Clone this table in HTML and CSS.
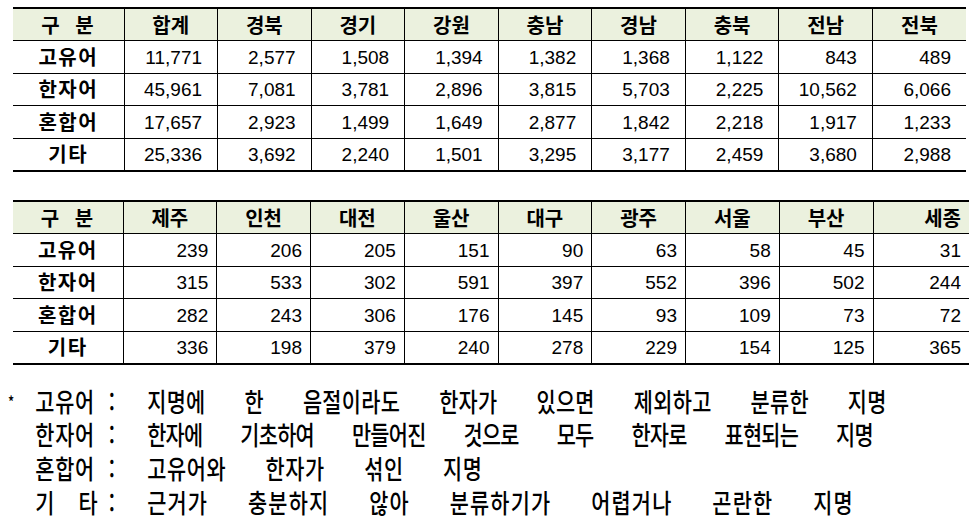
FILE: index.html
```html
<!DOCTYPE html>
<html lang="ko">
<head>
<meta charset="utf-8">
<title>지명 유형별 통계</title>
<link rel="stylesheet" href="styles.css">
</head>
<body>
<main class="page">
  <table class="stats">
    <colgroup><col class="col-label"><col span="9"></colgroup>
    <thead>
      <tr><th class="label">구&nbsp;&nbsp;분</th><th>합계</th><th>경북</th><th>경기</th><th>강원</th><th>충남</th><th>경남</th><th>충북</th><th>전남</th><th>전북</th></tr>
    </thead>
    <tbody>
      <tr><td class="label">고유어</td><td class="num">11,771</td><td class="num">2,577</td><td class="num">1,508</td><td class="num">1,394</td><td class="num">1,382</td><td class="num">1,368</td><td class="num">1,122</td><td class="num">843</td><td class="num">489</td></tr>
      <tr><td class="label">한자어</td><td class="num">45,961</td><td class="num">7,081</td><td class="num">3,781</td><td class="num">2,896</td><td class="num">3,815</td><td class="num">5,703</td><td class="num">2,225</td><td class="num">10,562</td><td class="num">6,066</td></tr>
      <tr><td class="label">혼합어</td><td class="num">17,657</td><td class="num">2,923</td><td class="num">1,499</td><td class="num">1,649</td><td class="num">2,877</td><td class="num">1,842</td><td class="num">2,218</td><td class="num">1,917</td><td class="num">1,233</td></tr>
      <tr><td class="label">기타</td><td class="num">25,336</td><td class="num">3,692</td><td class="num">2,240</td><td class="num">1,501</td><td class="num">3,295</td><td class="num">3,177</td><td class="num">2,459</td><td class="num">3,680</td><td class="num">2,988</td></tr>
    </tbody>
  </table>

  <table class="stats stats--second">
    <colgroup><col class="col-label2"><col span="8" class="col-data2"><col></colgroup>
    <thead>
      <tr><th class="label">구&nbsp;&nbsp;분</th><th>제주</th><th>인천</th><th>대전</th><th>울산</th><th>대구</th><th>광주</th><th>서울</th><th>부산</th><th class="right">세종</th></tr>
    </thead>
    <tbody>
      <tr><td class="label">고유어</td><td class="num">239</td><td class="num">206</td><td class="num">205</td><td class="num">151</td><td class="num">90</td><td class="num">63</td><td class="num">58</td><td class="num">45</td><td class="num">31</td></tr>
      <tr><td class="label">한자어</td><td class="num">315</td><td class="num">533</td><td class="num">302</td><td class="num">591</td><td class="num">397</td><td class="num">552</td><td class="num">396</td><td class="num">502</td><td class="num">244</td></tr>
      <tr><td class="label">혼합어</td><td class="num">282</td><td class="num">243</td><td class="num">306</td><td class="num">176</td><td class="num">145</td><td class="num">93</td><td class="num">109</td><td class="num">73</td><td class="num">72</td></tr>
      <tr><td class="label">기타</td><td class="num">336</td><td class="num">198</td><td class="num">379</td><td class="num">240</td><td class="num">278</td><td class="num">229</td><td class="num">154</td><td class="num">125</td><td class="num">365</td></tr>
    </tbody>
  </table>

  <section class="notes">
    <div class="note"><span class="mark">*</span><span class="term">고유어</span><span class="colon">:</span><span class="desc desc--one">지명에 한 음절이라도 한자가 있으면 제외하고 분류한 지명</span></div>
    <div class="note"><span class="mark"></span><span class="term">한자어</span><span class="colon">:</span><span class="desc desc--tight">한자에 기초하여 만들어진 것으로 모두 한자로 표현되는 지명</span></div>
    <div class="note"><span class="mark"></span><span class="term">혼합어</span><span class="colon">:</span><span class="desc desc--three">고유어와 한자가 섞인 지명</span></div>
    <div class="note"><span class="mark"></span><span class="term term--spread"><span>기</span><span>타</span></span><span class="colon">:</span><span class="desc desc--loose">근거가 충분하지 않아 분류하기가 어렵거나 곤란한 지명</span></div>
  </section>
</main>
</body>
</html>
```

FILE: styles.css
```css
html, body {
  margin: 0;
  padding: 0;
  background: #ffffff;
}

body {
  font-family: "Noto Sans CJK KR", "Noto Sans", sans-serif;
  color: #000000;
  overflow: hidden;
}

.page {
  padding-top: 7px;
}

.stats {
  table-layout: fixed;
  border-collapse: collapse;
  width: 953px;
  margin-left: 13px;
}

.col-label { width: 111px; }
.col-label2 { width: 110px; }
.col-data2 { width: 93.75px; }

.stats--second {
  width: 956px;
  margin-top: 28px;
}

.stats th,
.stats td {
  padding: 0;
  height: 32.6px;
  box-sizing: border-box;
  border-bottom: 1px solid #000;
  border-left: 1px solid #000;
  line-height: 1;
  white-space: nowrap;
}

.stats th:first-child,
.stats td:first-child {
  border-left: none;
}

.stats thead th {
  background: #ebf1de;
  font-weight: 700;
  font-size: 20px;
  text-align: center;
  border-top: 2px solid #000;
}

.stats thead th.right {
  text-align: right;
  padding-right: 8px;
}

.stats tbody tr:last-child td {
  border-bottom: 2px solid #000;
}

.stats .label {
  text-align: center;
  font-weight: 700;
  font-size: 20px;
  letter-spacing: 1.5px;
}

.stats td.num {
  text-align: right;
  padding-right: 15px;
  padding-top: 1px;
  font-family: "Liberation Sans", Arial, sans-serif;
  font-size: 19px;
}

.stats--second td.num {
  padding-right: 8px;
}

.notes {
  margin-top: 19px;
  font-size: 26px;
  font-weight: 500;
  transform: scaleX(0.8);
  transform-origin: 0 0;
  width: 1200px;
}

.note {
  display: flex;
  align-items: center;
  height: 33.7px;
  line-height: 1;
  white-space: pre;
}

.mark {
  width: 44px;
  padding-left: 10px;
  box-sizing: border-box;
  font-size: 16px;
}

.term {
  width: 78px;
  letter-spacing: 1px;
}

.term--spread {
  display: flex;
  justify-content: space-between;
  letter-spacing: 0;
}

.colon {
  width: 62px;
  padding-left: 14px;
  box-sizing: border-box;
}

.desc {
  word-spacing: 41px;
}

.desc--one {
  letter-spacing: 0.4px;
}

.desc--tight {
  letter-spacing: -0.9px;
}

.desc--three {
  letter-spacing: 0.8px;
}

.desc--loose {
  letter-spacing: 1.5px;
}
```
